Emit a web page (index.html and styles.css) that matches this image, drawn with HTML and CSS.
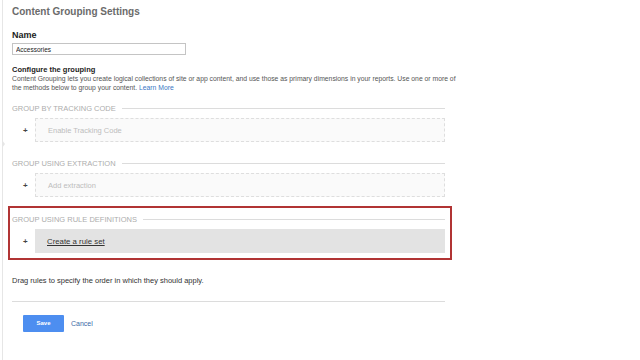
FILE: index.html
```html
<!DOCTYPE html>
<html lang="en">
<head>
    <meta charset="UTF-8">
    <meta name="viewport" content="width=device-width, initial-scale=1.0">
    <title>Content Grouping Settings</title>
    <link rel="stylesheet" href="styles.css">
</head>
<body>
    <div class="page">
        <span class="notch"></span>
        <h1 class="title">Content Grouping Settings</h1>

        <label class="name-label" for="groupName">Name</label>
        <input class="name-input" id="groupName" type="text" value="Accessories">

        <h2 class="config-title">Configure the grouping</h2>
        <p class="config-text">Content Grouping lets you create logical collections of site or app content, and use those as primary dimensions in your reports. Use one or more of the methods below to group your content. <a href="#">Learn More</a></p>

        <div class="section section-first">
            <div class="section-head"><span>GROUP BY TRACKING CODE</span><i class="rule"></i></div>
            <div class="row">
                <span class="plus">+</span>
                <div class="slot">Enable Tracking Code</div>
            </div>
        </div>

        <div class="section">
            <div class="section-head"><span>GROUP USING EXTRACTION</span><i class="rule"></i></div>
            <div class="row">
                <span class="plus">+</span>
                <div class="slot">Add extraction</div>
            </div>
        </div>

        <div class="section section-active">
            <div class="section-head"><span>GROUP USING RULE DEFINITIONS</span><i class="rule"></i></div>
            <div class="row">
                <span class="plus">+</span>
                <div class="slot slot-filled"><a href="#">Create a rule set</a></div>
            </div>
        </div>

        <p class="drag-hint">Drag rules to specify the order in which they should apply.</p>

        <div class="actions">
            <button class="btn-save">Save</button>
            <a class="btn-cancel" href="#">Cancel</a>
        </div>
    </div>
</body>
</html>
```

FILE: styles.css
```css
body {
    margin: 0;
    font-family: "Liberation Sans", Arial, sans-serif;
    color: #333;
    background: #fff;
}
.page {
    position: relative;
    margin-left: 2px;
    border-left: 1px solid #e6e6e6;
    padding: 6px 0 0 9px;
    min-height: 354px;
}
.notch {
    position: absolute;
    left: -1px;
    top: 140px;
    width: 0;
    height: 0;
    border-top: 4px solid transparent;
    border-bottom: 4px solid transparent;
    border-left: 3px solid #e6e6e6;
}
.title {
    margin: 0;
    font-size: 10px;
    line-height: 12px;
    font-weight: bold;
    color: #6b6b6b;
}
.name-label {
    display: block;
    margin-top: 11.5px;
    font-size: 9px;
    line-height: 11px;
    font-weight: bold;
    color: #222;
}
.name-input {
    display: block;
    box-sizing: border-box;
    margin: 2.5px 0 0;
    width: 174px;
    height: 12px;
    padding: 0 3px;
    border: 1px solid #c4c4c4;
    font-family: inherit;
    font-size: 6.5px;
    color: #222;
}
.config-title {
    margin: 9.5px 0 0;
    font-size: 7.5px;
    line-height: 9px;
    font-weight: bold;
    color: #222;
}
.config-text {
    margin: 0;
    width: 452px;
    font-size: 6.8px;
    line-height: 9px;
    color: #555;
}
.config-text a {
    color: #3b78c4;
    text-decoration: none;
}
.section {
    width: 433px;
    margin-top: 16.5px;
}
.section-first {
    margin-top: 12px;
}
.section-head {
    display: flex;
    align-items: center;
    gap: 6px;
    font-size: 7.5px;
    line-height: 9px;
    color: #adadad;
}
.rule {
    flex: 1;
    height: 1px;
    background: #dcdcdc;
}
.row {
    display: flex;
    align-items: center;
    margin-top: 5.5px;
}
.plus {
    width: 23px;
    padding-left: 11px;
    box-sizing: border-box;
    font-size: 8px;
    font-weight: bold;
    color: #444;
}
.slot {
    flex: 1;
    box-sizing: border-box;
    height: 24px;
    padding-left: 12px;
    display: flex;
    align-items: center;
    border: 1px dashed #dedede;
    background: #fafafa;
    font-size: 7.5px;
    color: #bdbdbd;
}
.slot-filled {
    border: none;
    background: #e3e3e3;
}
.slot-filled a {
    color: #333;
    font-size: 7.8px;
    text-decoration: underline;
}
.section-active {
    width: 433px;
    margin: 9px 0 0 -4px;
    padding: 6.5px 5px 5px 2px;
    border: 2px solid #b13434;
}
.drag-hint {
    margin: 15.5px 0 0;
    font-size: 7.5px;
    line-height: 9px;
    color: #333;
    width: 433px;
    padding-bottom: 16px;
    border-bottom: 1px solid #dcdcdc;
}
.actions {
    display: flex;
    align-items: center;
    gap: 7px;
    margin: 13px 0 0 11px;
}
.btn-save {
    width: 41px;
    height: 17px;
    padding: 0;
    border: none;
    border-radius: 1px;
    background: #4d8ef0;
    color: #fff;
    font-family: inherit;
    font-size: 6px;
    font-weight: bold;
}
.btn-cancel {
    font-size: 7px;
    color: #3c6aa8;
    text-decoration: none;
}
```
